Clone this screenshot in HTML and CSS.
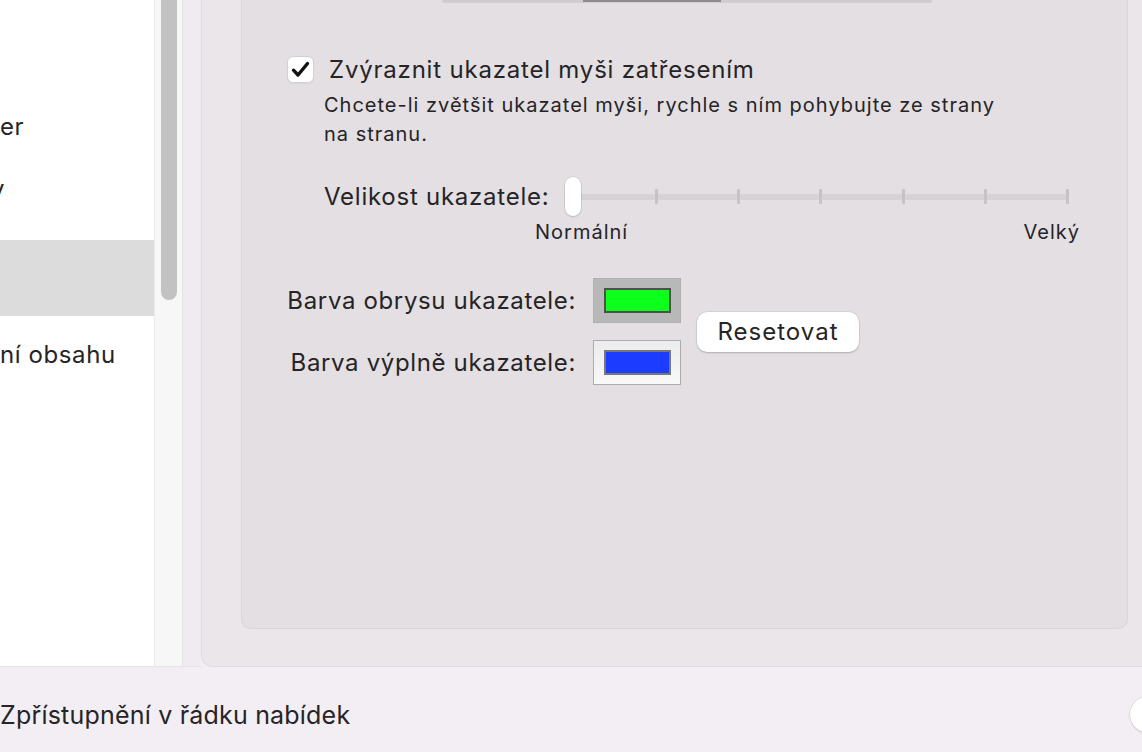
FILE: index.html
```html
<!DOCTYPE html>
<html lang="cs">
<head>
    <meta charset="UTF-8">
    <meta name="viewport" content="width=device-width, initial-scale=1.0">
    <title>Zpřístupnění – Ukazatel</title>
    <link rel="stylesheet" href="styles.css">
</head>
<body>
    <div class="window">
        <div class="main">
            <div class="sidebar">
                <div class="list">
                    <div class="item"></div>
                    <div class="item">er</div>
                    <div class="item"><span class="cut-y">y</span></div>
                    <div class="item selected"></div>
                    <div class="item">ní obsahu</div>
                </div>
                <div class="track">
                    <div class="thumb"></div>
                </div>
            </div>

            <div class="panel">
                <div class="box">
                    <div class="segbar"><div class="seg-on"></div></div>

                    <div class="check-row">
                        <div class="checkbox">
                            <svg width="19" height="17" viewBox="0 0 19 17">
                                <path d="M2.5 9.2 L7 14 L16.5 2.5" fill="none" stroke="#111" stroke-width="3.4" stroke-linecap="round" stroke-linejoin="round"/>
                            </svg>
                        </div>
                        <span class="check-label">Zvýraznit ukazatel myši zatřesením</span>
                    </div>
                    <p class="desc">Chcete-li zvětšit ukazatel myši, rychle s ním pohybujte ze strany<br>na stranu.</p>

                    <div class="slider-row">
                        <span class="slider-label">Velikost ukazatele:</span>
                        <div class="slider">
                            <div class="rail">
                                <span class="tick"></span>
                                <span class="tick"></span>
                                <span class="tick"></span>
                                <span class="tick"></span>
                                <span class="tick"></span>
                                <span class="tick"></span>
                                <span class="tick"></span>
                            </div>
                            <div class="knob"></div>
                        </div>
                    </div>
                    <div class="scale">
                        <span>Normální</span>
                        <span>Velký</span>
                    </div>

                    <div class="colors">
                        <span class="color-label">Barva obrysu ukazatele:</span>
                        <div class="well active"><div class="swatch green"></div></div>
                        <button class="reset">Resetovat</button>
                        <span class="color-label">Barva výplně ukazatele:</span>
                        <div class="well"><div class="swatch blue"></div></div>
                    </div>
                </div>
            </div>
        </div>

        <div class="footer">
            <span class="footer-text">Zpřístupnění v řádku nabídek</span>
            <div class="help"></div>
        </div>
    </div>
</body>
</html>
```

FILE: styles.css
```css
body {
    margin: 0;
    font-family: Inter, "Noto Sans", sans-serif;
    color: #262426;
    background-color: #f2eef3;
    overflow: hidden;
}

.window {
    width: 1142px;
    height: 752px;
    overflow: hidden;
}

.main {
    display: flex;
    height: 667px;
}

/* left list with scrollbar */
.sidebar {
    display: flex;
    height: 666px;
    border-bottom: 1px solid #e6e4e6;
    background-color: #efebf0;
    padding-right: 18px;
}

.list {
    width: 154px;
    background-color: #fff;
    border-right: 1px solid #e9e9e9;
    overflow: hidden;
}

.item {
    height: 76px;
    display: flex;
    align-items: center;
    font-size: 24px;
    letter-spacing: 0.6px;
    white-space: nowrap;
}

.item:first-child {
    height: 88px;
}

.item.selected {
    background-color: #dcdcdc;
}

.cut-y {
    margin-left: -9px;
    margin-top: -28px;
}

.track {
    width: 28px;
    background-color: #f7f7f7;
    border-right: 1px solid #e4e4e4;
    padding-left: 6px;
    box-sizing: border-box;
}

.thumb {
    width: 16px;
    height: 310px;
    margin-top: -10px;
    background-color: #c2c2c2;
    border-radius: 8px;
}

/* right panel */
.panel {
    flex: 1;
    margin-right: -40px;
    background-color: #eae6ea;
    border: 1px solid #dedade;
    border-top: none;
    border-radius: 0 0 0 12px;
    padding: 0 0 37px 39px;
}

.box {
    width: 887px;
    height: 629px;
    box-sizing: border-box;
    background-color: #e3dfe3;
    border: 1px solid #d9d5d9;
    border-top: none;
    border-radius: 0 0 10px 10px;
    overflow: hidden;
}

.segbar {
    width: 490px;
    height: 2px;
    margin-left: 200px;
    background-color: #cfcbcf;
    box-shadow: 0 1px 1px rgba(0, 0, 0, 0.08);
    border-radius: 0 0 4px 4px;
}

.seg-on {
    width: 138px;
    height: 2px;
    margin-left: 141px;
    background-color: #8e8b8e;
}

.check-row {
    display: flex;
    align-items: center;
    margin: 53px 0 0 45px;
}

.checkbox {
    width: 27px;
    height: 27px;
    box-sizing: border-box;
    background-color: #fff;
    border: 1px solid #d3d0d3;
    border-radius: 6px;
    display: flex;
    align-items: center;
    justify-content: center;
    box-shadow: 0 1px 1px rgba(0, 0, 0, 0.05);
}

.check-label {
    margin-left: 15px;
    font-size: 24px;
    letter-spacing: 0.8px;
}

.desc {
    margin: 7px 0 0 82px;
    font-size: 20px;
    line-height: 29px;
    letter-spacing: 1px;
}

.slider-row {
    display: flex;
    align-items: center;
    margin: 28px 0 0 82px;
}

.slider-label {
    width: 241px;
    font-size: 24px;
    letter-spacing: 0.75px;
}

.slider {
    position: relative;
    width: 504px;
    height: 39px;
    display: flex;
    align-items: center;
}

.rail {
    width: 500px;
    height: 6px;
    margin-left: 4px;
    background-color: #d6d2d6;
    border-radius: 3px;
    display: flex;
    justify-content: space-between;
    align-items: center;
    padding: 0 0 0 4px;
    box-sizing: border-box;
}

.tick {
    width: 3px;
    height: 15px;
    background-color: #c6c2c6;
    border-radius: 1px;
}

.knob {
    position: absolute;
    left: 0;
    top: 0;
    width: 16px;
    height: 39px;
    box-sizing: border-box;
    background-color: #fff;
    border-radius: 8px;
    box-shadow: 0 0 0 0.5px rgba(0, 0, 0, 0.12), 0 1px 2px rgba(0, 0, 0, 0.15);
}

.scale {
    display: flex;
    justify-content: space-between;
    width: 545px;
    margin: 4px 0 0 293px;
    font-size: 20px;
    line-height: 24px;
    letter-spacing: 1px;
}

.colors {
    display: grid;
    grid-template-columns: 334px 88px auto;
    column-gap: 17px;
    row-gap: 17px;
    align-items: center;
    margin-top: 34px;
}

.color-label {
    text-align: right;
    font-size: 24px;
    letter-spacing: 0.65px;
}

.well {
    width: 88px;
    height: 45px;
    box-sizing: border-box;
    padding: 9px 9px 9px 10px;
    border: 1px solid #acacac;
    background: linear-gradient(#ececec, #f8f8f8);
}

.well.active {
    background: #b8b8b8;
    border-color: #b0b0b0;
}

.swatch {
    height: 25px;
    box-sizing: border-box;
}

.swatch.green {
    background-color: #0dff1c;
    border: 2px solid #4f4f4f;
}

.swatch.blue {
    background-color: #1c3dff;
    border: 2px solid #777;
}

.reset {
    grid-column: 3;
    grid-row: 1 / span 2;
    justify-self: start;
    margin-left: -1px;
    width: 162px;
    height: 40px;
    font-family: inherit;
    font-size: 24px;
    letter-spacing: 1px;
    color: #262426;
    background-color: #fff;
    border: none;
    border-radius: 10px;
    box-shadow: 0 0 0 0.5px rgba(0, 0, 0, 0.1), 0 1px 2px rgba(0, 0, 0, 0.18);
}

/* bottom bar */
.footer {
    display: flex;
    align-items: center;
    height: 85px;
    box-sizing: border-box;
    padding-top: 10px;
}

.footer-text {
    font-size: 25px;
    letter-spacing: 0.2px;
}

.help {
    width: 37px;
    height: 37px;
    margin-left: auto;
    margin-right: -25px;
    flex-shrink: 0;
    background-color: #fff;
    border-radius: 50%;
    box-shadow: 0 0 0 0.5px rgba(0, 0, 0, 0.12), 0 1px 2px rgba(0, 0, 0, 0.12);
}
```
